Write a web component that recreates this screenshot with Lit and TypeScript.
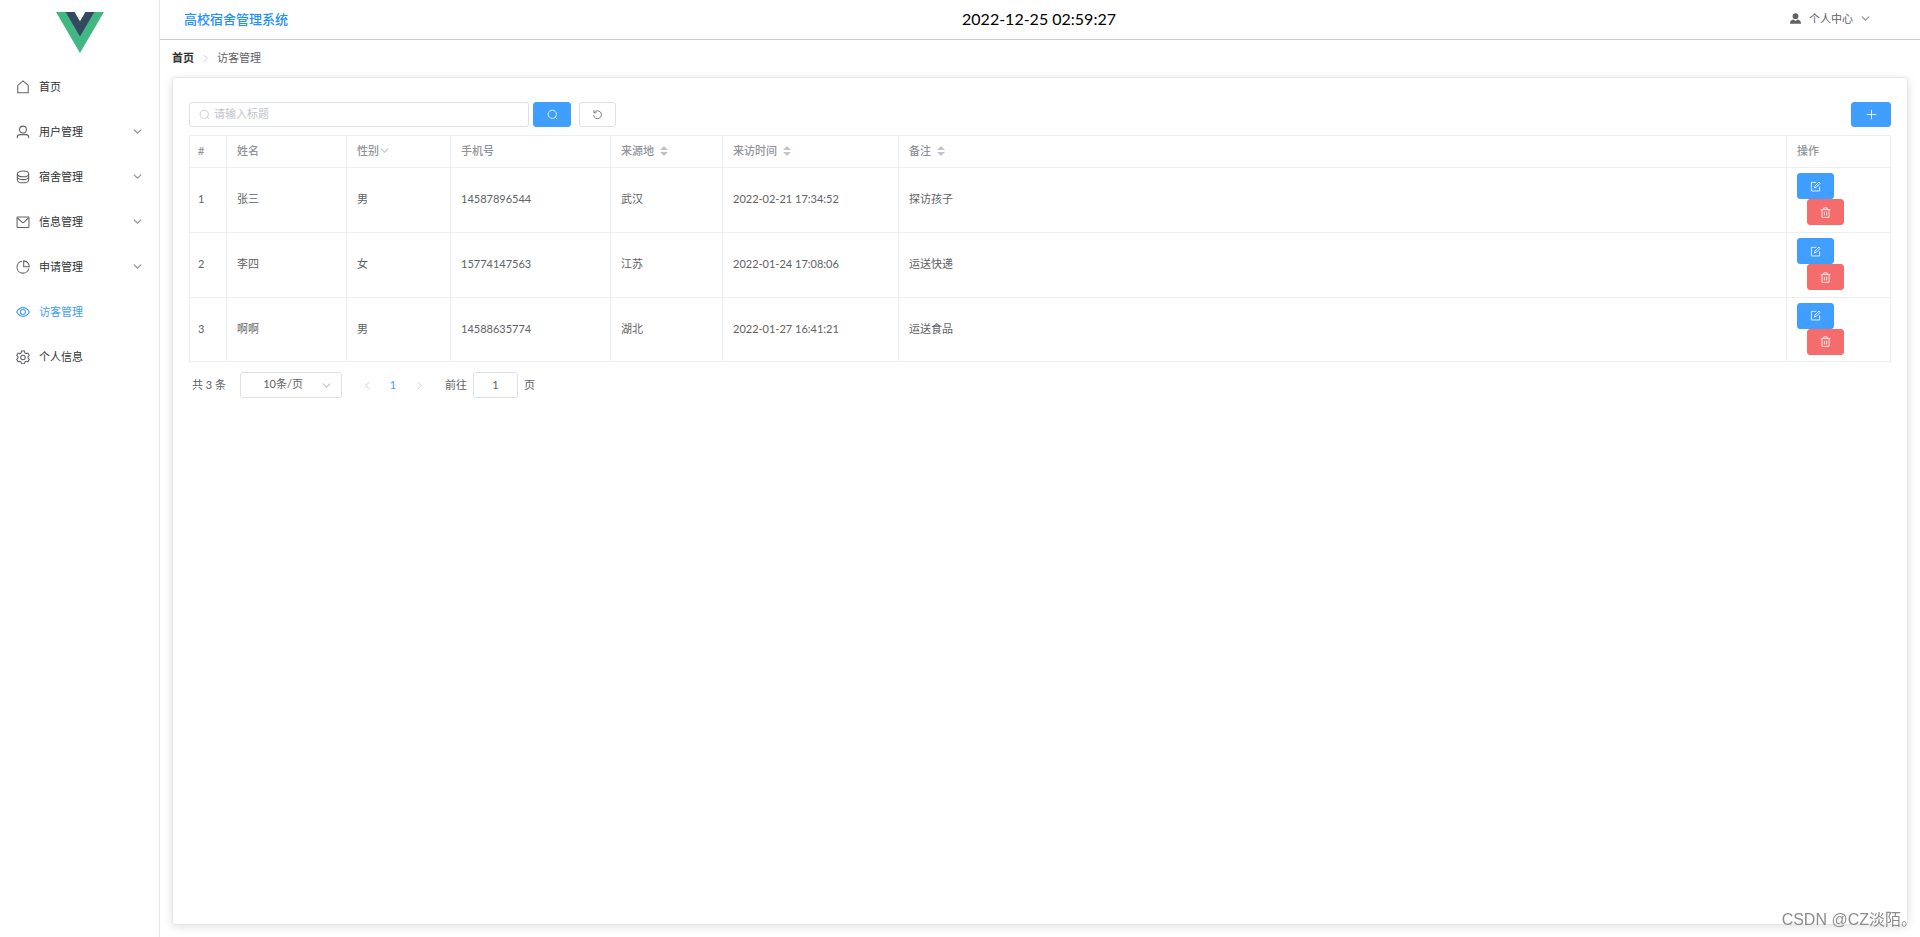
import { LitElement, html, css, svg, nothing } from "lit";
import { customElement, state } from "lit/decorators.js";

const icons = {
  house: svg`<path d="M2 14.500V6.200L8 1l6 5.200v8.300z"/>`,
  user: svg`<circle cx="8" cy="5.200" r="3.900"/><path d="M1.500 15v-1.200c0-1.800 1.300-2.800 3-2.800h7c1.700 0 3 1 3 2.800V15"/>`,
  coin: svg`<ellipse cx="8" cy="4.500" rx="6.500" ry="3.300"/><path d="M1.500 4.500v3.200C1.500 9.500 4.400 11 8 11s6.500-1.500 6.500-3.300V4.500M1.500 8v3.300c0 1.800 2.900 3.300 6.500 3.300s6.500-1.500 6.500-3.300V8"/>`,
  message: svg`<rect x="1.200" y="2.200" width="13.600" height="12" rx="0.800"/><path d="M1.500 3 6.700 8.200q1.300 1.200 2.600 0L14.500 3"/>`,
  pie: svg`<path d="M6.800 1.500A6.800 6.800 0 1 0 14.600 9.500M8.800 1v6.700h6.400A6.600 6.600 0 0 0 8.800 1z"/>`,
  view: svg`<path d="M.7 8C2.500 4.700 5 3 8 3s5.500 1.700 7.300 5C13.500 11.300 11 13 8 13S2.500 11.300.7 8z"/><circle cx="8" cy="8" r="2.800"/>`,
  setting: svg`<path d="M6.400 1.200h3.200l.5 2 1.500.9 2-.6 1.600 2.800-1.500 1.400v1.600l1.500 1.400-1.600 2.800-2-.6-1.500.9-.5 2H6.400l-.5-2-1.500-.9-2 .6-1.600-2.800 1.500-1.400V7.700L.8 6.300l1.600-2.800 2 .6 1.500-.9z"/><circle cx="8" cy="8.500" r="2.600"/>`,
  down: svg`<path d="M1.500 4.500l6.500 6.500 6.500-6.500"/>`,
  left: svg`<path d="M10.500 3l-5 5 5 5"/>`,
  right: svg`<path d="M5.500 3l5 5-5 5"/>`,
  search: svg`<circle cx="7.700" cy="7.700" r="6"/><path d="M12 12l2.500 2.500"/>`,
  refresh: svg`<path d="M3.200 5.200A5.700 5.700 0 1 1 2.300 8.800M2.800 1.800v3.700h3.700"/>`,
  plus: svg`<path d="M8 1v14M1 8h14"/>`,
  edit: svg`<path d="M9 2H2v12.500h12V8M6.500 10l.6-2.500L13 1.500l1.800 1.800L9 9.300z"/>`,
  remove: svg`<path d="M1 3.800h14M5.500 3.500V1.300h5v2.200M2.800 4v11h10.400V4M6.300 6.800v5.500M9.700 6.800v5.500"/>`,
  avatar: svg`<g fill="currentColor" stroke="none"><circle cx="8" cy="4.600" r="4.200"/><path d="M0 15.500c0-3.600 1.800-5.700 5-6.200L8 11.500l3-2.200c3.200.5 5 2.600 5 6.200z"/></g>`,
};

type IconName = keyof typeof icons;

const icon = (name: IconName, size = "") =>
  html`<svg class="icon ${size}" viewBox="0 0 16 16" aria-hidden="true">${icons[name]}</svg>`;

interface MenuEntry {
  label: string;
  icon: IconName;
  group?: boolean;
}

interface Visitor {
  name: string;
  gender: string;
  phone: string;
  origin: string;
  time: string;
  remark: string;
}

const menu: MenuEntry[] = [
  { label: "首页", icon: "house" },
  { label: "用户管理", icon: "user", group: true },
  { label: "宿舍管理", icon: "coin", group: true },
  { label: "信息管理", icon: "message", group: true },
  { label: "申请管理", icon: "pie", group: true },
  { label: "访客管理", icon: "view" },
  { label: "个人信息", icon: "setting" },
];

const visitors: Visitor[] = [
  { name: "张三", gender: "男", phone: "14587896544", origin: "武汉", time: "2022-02-21 17:34:52", remark: "探访孩子" },
  { name: "李四", gender: "女", phone: "15774147563", origin: "江苏", time: "2022-01-24 17:08:06", remark: "运送快递" },
  { name: "啊啊", gender: "男", phone: "14588635774", origin: "湖北", time: "2022-01-27 16:41:21", remark: "运送食品" },
];

@customElement("app-root")
export class AppRoot extends LitElement {
  @state() private active = "访客管理";

  static styles = css`
    :host {
      display: flex;
      min-height: 100vh;
      background: #fff;
      color: #606266;
      font: 11px/16px Lato, "Noto Sans CJK SC", sans-serif;
    }
    * {
      box-sizing: border-box;
    }
    button,
    input,
    select {
      margin: 0;
      font: inherit;
      color: inherit;
    }
    a {
      color: inherit;
      text-decoration: none;
    }
    .icon {
      width: 11px;
      height: 11px;
      flex: none;
      fill: none;
      stroke: currentColor;
      stroke-width: 1.2;
    }
    .icon.large {
      width: 14px;
      height: 14px;
    }
    .icon.small {
      width: 9px;
      height: 9px;
      stroke-width: 2;
    }
    .sidebar {
      width: 160px;
      flex: none;
      border-right: 1px solid #e6e6e6;
    }
    .logo {
      display: block;
      width: 48px;
      height: 41px;
      margin: 12px auto 11px;
    }
    .entry {
      display: flex;
      align-items: center;
      gap: 9px;
      width: 100%;
      height: 45px;
      padding: 0 17px 0 16px;
      border: 0;
      background: none;
      color: #303133;
      text-align: left;
      cursor: pointer;
    }
    .entry .icon.large {
      color: #606266;
    }
    .entry .icon.small {
      color: #909399;
    }
    .label {
      flex: 1;
    }
    .entry.active,
    .entry.active .icon {
      color: #409eff;
    }
    .page {
      flex: 1;
      min-width: 0;
      display: flex;
      flex-direction: column;
    }
    .header {
      display: flex;
      align-items: center;
      justify-content: space-between;
      height: 40px;
      padding: 0 50px 2px 24px;
      border-bottom: 1px solid #ccc;
    }
    .title {
      margin: 0;
      font-size: 13px;
      font-weight: 500;
      color: #1e90ff;
    }
    .clock {
      font-size: 16px;
      color: #000;
    }
    .account {
      display: flex;
      align-items: center;
      gap: 8px;
      padding: 0;
      border: 0;
      background: none;
      cursor: pointer;
    }
    .account .small {
      color: #909399;
    }
    .main {
      flex: 1;
      display: flex;
      flex-direction: column;
      padding: 0 12px 12px;
    }
    .crumbs {
      display: flex;
      align-items: center;
      gap: 6px;
      height: 37px;
      padding-bottom: 1px;
    }
    .crumbs a {
      color: #303133;
      font-weight: 700;
    }
    .crumbs .icon {
      color: #c0c4cc;
    }
    .card {
      flex: 1;
      padding: 24px 16px;
      border: 1px solid #e4e7ed;
      border-radius: 3px;
      box-shadow: 0 2px 10px rgba(0, 0, 0, 0.12);
    }
    .toolbar {
      display: flex;
      height: 25px;
      margin-bottom: 8px;
    }
    .search {
      display: flex;
      align-items: center;
      gap: 4px;
      width: 340px;
      margin-right: 4px;
      padding: 0 10px 1px 9px;
      border: 1px solid #dcdfe6;
      border-radius: 3px;
      color: #c0c4cc;
    }
    .search input {
      flex: 1;
      min-width: 0;
      padding: 0;
      border: 0;
      outline: 0;
      background: none;
      color: #606266;
    }
    .search input::placeholder {
      color: #c0c4cc;
    }
    .button {
      display: flex;
      align-items: center;
      justify-content: center;
      width: 37px;
      height: 26px;
      padding: 0;
      border: 1px solid #dcdfe6;
      border-radius: 3px;
      background: #fff;
      cursor: pointer;
    }
    .toolbar .button {
      height: 25px;
    }
    .button.primary {
      border-color: #409eff;
      background: #409eff;
      color: #fff;
    }
    .button.danger {
      margin-left: 10px;
      border-color: #f56c6c;
      background: #f56c6c;
      color: #fff;
    }
    .toolbar .reset {
      margin-left: 8px;
    }
    .toolbar .query {
      width: 38px;
    }
    .toolbar .add {
      width: 40px;
      margin-left: auto;
    }
    .grid {
      width: 100%;
      table-layout: fixed;
      border-collapse: separate;
      border-spacing: 0;
      border: solid #ebeef5;
      border-width: 1px 0 0 1px;
    }
    .grid th,
    .grid td {
      padding: 0 10px 2px;
      border: solid #ebeef5;
      border-width: 0 1px 1px 0;
      text-align: left;
    }
    .grid th {
      height: 32px;
      color: #909399;
      font-weight: 500;
    }
    .grid td {
      height: 65px;
    }
    .grid tr:last-child td {
      height: 64px;
    }
    .grid th:first-child,
    .grid td:first-child {
      padding-left: 8px;
    }
    .head {
      display: flex;
      align-items: center;
    }
    .head .icon {
      color: #c0c4cc;
      margin-left: 1px;
    }
    .sort {
      width: 8px;
      height: 10px;
      margin-left: 6px;
      fill: #c0c4cc;
    }
    .w-index {
      width: 37px;
    }
    .w-name {
      width: 120px;
    }
    .w-gender,
    .w-actions {
      width: 104px;
    }
    .w-phone {
      width: 160px;
    }
    .w-origin {
      width: 112px;
    }
    .w-time {
      width: 176px;
    }
    .pager {
      display: flex;
      align-items: center;
      height: 26px;
      margin-top: 10px;
      padding-left: 3px;
    }
    .size {
      position: relative;
      display: flex;
      margin: 0 12px 0 14px;
    }
    .size select {
      width: 102px;
      height: 26px;
      padding: 0 20px 2px 4px;
      appearance: none;
      border: 1px solid #dcdfe6;
      border-radius: 3px;
      background: #fff;
      text-align: center;
      text-align-last: center;
    }
    .size .icon {
      position: absolute;
      right: 11px;
      top: 9px;
      color: #c0c4cc;
      pointer-events: none;
    }
    .step {
      display: flex;
      align-items: center;
      justify-content: center;
      width: 26px;
      height: 24px;
      padding: 0;
      border: 0;
      background: none;
      color: #606266;
      cursor: pointer;
    }
    .step:disabled {
      color: #c0c4cc;
    }
    .step.current {
      color: #409eff;
    }
    .jump {
      display: flex;
      align-items: center;
      gap: 6px;
      margin-left: 13px;
    }
    .jump input {
      width: 45px;
      height: 26px;
      padding: 0 0 2px;
      border: 1px solid #dcdfe6;
      border-radius: 3px;
      text-align: center;
    }
    .watermark {
      position: fixed;
      right: 3px;
      bottom: 7px;
      color: #8c8c8c;
      font: 16px/20px "Liberation Sans", "Noto Sans CJK SC", sans-serif;
      pointer-events: none;
    }
  `;

  private renderEntry(entry: MenuEntry) {
    const cls = `entry ${entry.label === this.active ? "active" : ""}`;
    if (entry.group) {
      return html`<button class=${cls} aria-expanded="false">
        ${icon(entry.icon, "large")}<span class="label">${entry.label}</span>${icon("down", "small")}
      </button>`;
    }
    return html`<a class=${cls} href="#" @click=${() => (this.active = entry.label)}>
      ${icon(entry.icon, "large")}<span class="label">${entry.label}</span>
    </a>`;
  }

  private renderHead(label: string, mark?: "sort" | "filter") {
    return html`<th scope="col">
      <span class="head">${label}${mark === "filter"
        ? icon("down", "small")
        : mark === "sort"
          ? html`<svg class="sort" viewBox="0 0 8 10" aria-hidden="true"><path d="M0 4l4-4 4 4zM0 6h8l-4 4z" /></svg>`
          : nothing}</span>
    </th>`;
  }

  private renderRow(v: Visitor, index: number) {
    return html`<tr>
      <td>${index + 1}</td>
      <td>${v.name}</td>
      <td>${v.gender}</td>
      <td>${v.phone}</td>
      <td>${v.origin}</td>
      <td>${v.time}</td>
      <td>${v.remark}</td>
      <td>
        <button class="button primary" aria-label="编辑">${icon("edit")}</button>
        <button class="button danger" aria-label="删除">${icon("remove")}</button>
      </td>
    </tr>`;
  }

  render() {
    return html`
      <aside class="sidebar">
        <svg class="logo" viewBox="0 0 262 227" preserveAspectRatio="none" role="img" aria-label="Vue">
          <path fill="#41b883" d="M161.096 0l-30.225 52.351L100.647 0H0l130.872 226.688L261.749 0z" />
          <path fill="#34495e" d="M161.096 0l-30.225 52.351L100.647 0H52.346l78.526 136.010L209.398 0z" />
        </svg>
        <nav>${menu.map((entry) => this.renderEntry(entry))}</nav>
      </aside>
      <div class="page">
        <header class="header">
          <h1 class="title">高校宿舍管理系统</h1>
          <time class="clock">2022-12-25 02:59:27</time>
          <button class="account">${icon("avatar")}<span>个人中心</span>${icon("down", "small")}</button>
        </header>
        <main class="main">
          <nav class="crumbs"><a href="#">首页</a>${icon("right")}<span>访客管理</span></nav>
          <section class="card">
            <div class="toolbar">
              <label class="search">${icon("search")}<input type="text" aria-label="标题" placeholder="请输入标题" /></label>
              <button class="button primary query" aria-label="搜索">${icon("search")}</button>
              <button class="button reset" aria-label="重置">${icon("refresh")}</button>
              <button class="button primary add" aria-label="新增">${icon("plus")}</button>
            </div>
            <table class="grid">
              <colgroup>
                <col class="w-index" />
                <col class="w-name" />
                <col class="w-gender" />
                <col class="w-phone" />
                <col class="w-origin" />
                <col class="w-time" />
                <col />
                <col class="w-actions" />
              </colgroup>
              <thead>
                <tr>
                  ${this.renderHead("#")}${this.renderHead("姓名")}${this.renderHead("性别", "filter")}
                  ${this.renderHead("手机号")}${this.renderHead("来源地", "sort")}${this.renderHead("来访时间", "sort")}
                  ${this.renderHead("备注", "sort")}${this.renderHead("操作")}
                </tr>
              </thead>
              <tbody>
                ${visitors.map((v, i) => this.renderRow(v, i))}
              </tbody>
            </table>
            <div class="pager">
              <span>共 ${visitors.length} 条</span>
              <span class="size">
                <select aria-label="每页条数">
                  <option>10条/页</option>
                  <option>20条/页</option>
                  <option>50条/页</option>
                </select>
                ${icon("down", "small")}
              </span>
              <button class="step" disabled aria-label="上一页">${icon("left")}</button>
              <button class="step current" aria-current="page">1</button>
              <button class="step" disabled aria-label="下一页">${icon("right")}</button>
              <label class="jump">前往<input type="text" inputmode="numeric" .value=${"1"} />页</label>
            </div>
          </section>
        </main>
      </div>
      <div class="watermark">CSDN @CZ淡陌。</div>
    `;
  }
}
